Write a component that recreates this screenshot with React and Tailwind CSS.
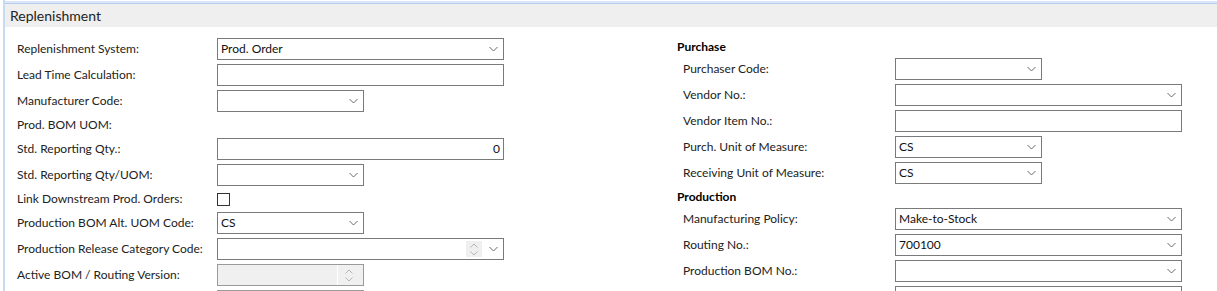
import React from "react";

const font = { fontFamily: "Lato, 'Noto Sans', sans-serif" };

function Chevron() {
  return (
    <svg width="9" height="6" viewBox="0 0 9 6" className="shrink-0">
      <path d="M0.5 1 L4.5 5 L8.5 1" fill="none" stroke="#6b6b6b" strokeWidth="1" />
    </svg>
  );
}

function Spin({ bg }) {
  return (
    <div className={`flex h-[16px] w-[16px] flex-col items-center justify-center gap-[3px] ${bg}`}>
      <svg width="8" height="5" viewBox="0 0 8 5">
        <path d="M0.5 4.5 L4 1 L7.5 4.5" fill="none" stroke="#b5b5b5" strokeWidth="1" />
      </svg>
      <svg width="8" height="5" viewBox="0 0 8 5">
        <path d="M0.5 0.5 L4 4 L7.5 0.5" fill="none" stroke="#b5b5b5" strokeWidth="1" />
      </svg>
    </div>
  );
}

function Box({ w, value = "", dropdown, right, spin, disabled }) {
  return (
    <div
      className={`flex h-[22px] items-center border ${w} ${
        disabled ? "border-[#9a9a9a] bg-[#f0f0f0]" : "border-[#7a7a7a] bg-white"
      }`}
    >
      <div
        className={`min-w-0 flex-1 whitespace-nowrap px-[3px] text-[12px] leading-[18px] text-[#111] ${
          right ? "text-right" : ""
        }`}
      >
        {value}
      </div>
      {spin && !disabled && (
        <div className="mr-[7px]">
          <Spin bg="bg-[#efefef]" />
        </div>
      )}
      {spin && disabled && (
        <div className="flex h-full items-center border-l border-white pl-[3px] pr-[6px]">
          <Spin bg="" />
        </div>
      )}
      {dropdown && (
        <div className="mr-[5px] flex items-center">
          <Chevron />
        </div>
      )}
    </div>
  );
}

function Row({ label, children, text, lw = "w-[200px]" }) {
  return (
    <div className={`flex items-center ${text ? "h-[18px]" : "h-[22px]"}`}>
      <div className={`${lw} shrink-0 text-[12px] text-[#222]`}>{label}</div>
      {children}
    </div>
  );
}

function Heading({ children }) {
  return (
    <div className="flex h-[16px] items-center pt-[1px] text-[12px] font-bold text-black">{children}</div>
  );
}

export default function App() {
  const L = "w-[287px]";
  const S = "w-[147px]";
  return (
    <div className="h-[291px] w-[1217px] overflow-hidden bg-white" style={font}>
      <div className="ml-[3px] h-full border-l-2 border-[#c9daf3]">
        <div className="h-[1px] bg-white" />
        <div className="h-[2px] bg-[#dbe6f8]" />
        <div className="h-[1px] bg-[#b7cbec]" />
        <div className="flex h-[23px] items-center bg-[#efefef] pl-[5px] text-[14px] text-[#222]">
          Replenishment
        </div>
        <div className="flex pt-[11px]">
          <div className="flex w-[672px] shrink-0 flex-col gap-[4px] pl-[12px]">
            <Row label="Replenishment System:">
              <Box w={L} value="Prod. Order" dropdown />
            </Row>
            <Row label="Lead Time Calculation:">
              <Box w={L} />
            </Row>
            <Row label="Manufacturer Code:">
              <Box w={S} dropdown />
            </Row>
            <Row label="Prod. BOM UOM:" text />
            <Row label="Std. Reporting Qty.:">
              <Box w={L} value="0" right />
            </Row>
            <Row label="Std. Reporting Qty/UOM:">
              <Box w={S} dropdown />
            </Row>
            <Row label="Link Downstream Prod. Orders:" text>
              <div className="h-[13px] w-[13px] border border-[#333] bg-white" />
            </Row>
            <Row label="Production BOM Alt. UOM Code:">
              <Box w={S} value="CS" dropdown />
            </Row>
            <Row label="Production Release Category Code:">
              <Box w={L} spin dropdown />
            </Row>
            <Row label="Active BOM / Routing Version:">
              <Box w={S} spin disabled />
            </Row>
            <Row label="">
              <Box w={S} disabled />
            </Row>
          </div>
          <div className="flex flex-col gap-[4px]">
            <Heading>Purchase</Heading>
            <div className="flex flex-col gap-[4px] pl-[6px]">
              <Row label="Purchaser Code:" lw="w-[212px]">
                <Box w={S} dropdown />
              </Row>
              <Row label="Vendor No.:" lw="w-[212px]">
                <Box w={L} dropdown />
              </Row>
              <Row label="Vendor Item No.:" lw="w-[212px]">
                <Box w={L} />
              </Row>
              <Row label="Purch. Unit of Measure:" lw="w-[212px]">
                <Box w={S} value="CS" dropdown />
              </Row>
              <Row label="Receiving Unit of Measure:" lw="w-[212px]">
                <Box w={S} value="CS" dropdown />
              </Row>
            </div>
            <Heading>Production</Heading>
            <div className="flex flex-col gap-[4px] pl-[6px]">
              <Row label="Manufacturing Policy:" lw="w-[212px]">
                <Box w={L} value="Make-to-Stock" dropdown />
              </Row>
              <Row label="Routing No.:" lw="w-[212px]">
                <Box w={L} value="700100" dropdown />
              </Row>
              <Row label="Production BOM No.:" lw="w-[212px]">
                <Box w={L} dropdown />
              </Row>
              <Row label="" lw="w-[212px]">
                <Box w={L} />
              </Row>
            </div>
          </div>
        </div>
      </div>
    </div>
  );
}
